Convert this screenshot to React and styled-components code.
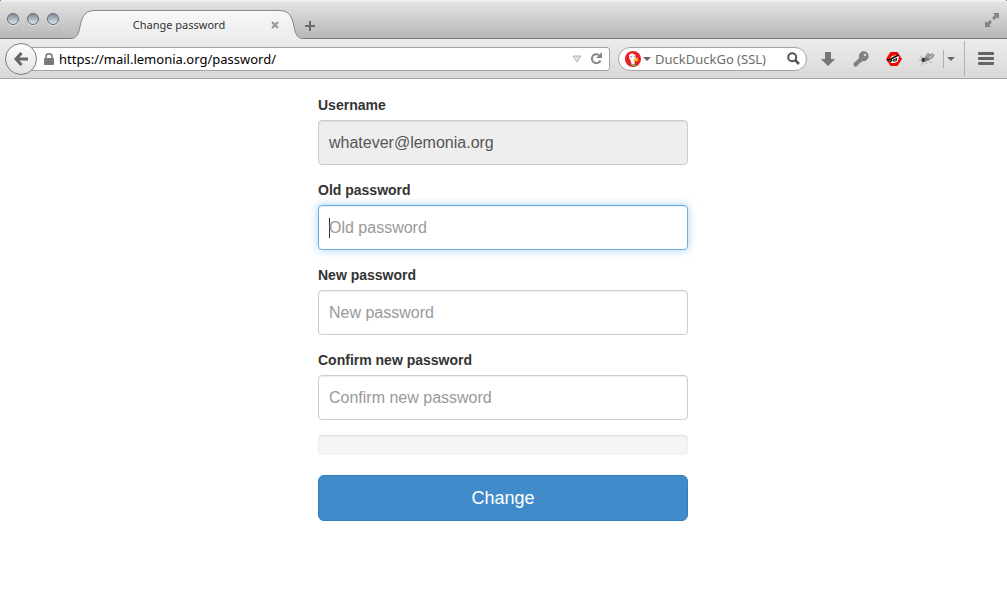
import React, { useState } from "react";
import styled, { createGlobalStyle } from "styled-components";

const fields = [
  { id: "old", label: "Old password", focus: true },
  { id: "new", label: "New password" },
  { id: "confirm", label: "Confirm new password" },
];

function TitleBar() {
  return (
    <Strip>
      <Lights>
        <Light aria-label="Close window" />
        <Light aria-label="Minimize window" />
        <Light aria-label="Zoom window" />
      </Lights>
      <Tab>
        <TabEdge viewBox="0 0 24 29" aria-hidden="true">
          <path d="M0 29V28.500C5 28.500 7 25 8.500 19C10.500 9 12 .5 24 .5V29Z" fill="url(#tabFill)" />
          <path d="M0 28.500C5 28.500 7 25 8.500 19C10.500 9 12 .5 24 .5" fill="none" stroke="#858585" />
          <defs>
            <linearGradient id="tabFill" x1="0" y1="0" x2="0" y2="1">
              <stop offset="0" stopColor="#f8f8f8" />
              <stop offset="1" stopColor="#ececec" />
            </linearGradient>
          </defs>
        </TabEdge>
        <TabBody>
          <TabTitle>Change password</TabTitle>
          <TabClose aria-label="Close tab">
            <svg width="8" height="8" viewBox="0 0 8 8">
              <path d="M1 1L7 7M7 1L1 7" stroke="#999" strokeWidth="2.200" />
            </svg>
          </TabClose>
        </TabBody>
        <TabEdge viewBox="0 0 24 29" aria-hidden="true">
          <path d="M24 29V28.500C19 28.500 17 25 15.500 19C13.500 9 12 .5 0 .5V29Z" fill="url(#tabFill)" />
          <path d="M24 28.500C19 28.500 17 25 15.500 19C13.500 9 12 .5 0 .5" fill="none" stroke="#858585" />
        </TabEdge>
      </Tab>
      <NewTab aria-label="New tab">
        <svg width="10" height="10" viewBox="0 0 10 10">
          <path d="M5 0V10M0 5H10" stroke="#6a6a6a" strokeWidth="2" />
        </svg>
      </NewTab>
      <FullScreen aria-label="Full screen">
        <svg width="14" height="14" viewBox="0 0 14 14" fill="#848484">
          <path d="M8 0H14V6L12 4.300L9 7L7 5L9.700 2Z" />
          <path d="M0 8L2 9.700L5 7L7 9L4.300 12L6 14H0Z" />
        </svg>
      </FullScreen>
    </Strip>
  );
}

function NavBar() {
  const [url, setUrl] = useState("https://mail.lemonia.org/password/");

  return (
    <Nav>
      <Back aria-label="Back">
        <svg width="14" height="14" viewBox="0 0 14 14">
          <path d="M7.500 1L2 7L7.500 13M2.500 7H14" fill="none" stroke="#666" strokeWidth="3" />
        </svg>
      </Back>
      <UrlBar>
        <svg width="10" height="12" viewBox="0 0 10 12">
          <path d="M2 6V3.500A3 2.800 0 0 1 8 3.500V6" fill="none" stroke="#7a7a7a" strokeWidth="1.600" />
          <rect y="5" width="10" height="7" rx="1" fill="#7a7a7a" />
        </svg>
        <UrlInput
          aria-label="Address"
          value={url}
          onChange={(e) => setUrl(e.target.value)}
        />
        <BarButton aria-label="History">
          <svg width="10" height="8" viewBox="0 0 10 8">
            <path d="M1 1H9L5 7Z" fill="#e4e4e4" stroke="#b4b4b4" />
          </svg>
        </BarButton>
        <BarButton aria-label="Reload">
          <svg width="13" height="13" viewBox="0 0 13 13">
            <path d="M10.500 8.500A4.500 4.500 0 1 1 9 3" fill="none" stroke="#858585" strokeWidth="2" />
            <path d="M12 0V6H6Z" fill="#858585" />
          </svg>
        </BarButton>
      </UrlBar>
      <SearchBar>
        <Engine aria-label="Search engine">
          <svg width="16" height="16" viewBox="0 0 16 16">
            <circle cx="8" cy="8" r="8" fill="#ea1c25" />
            <path d="M4 4.500C4.500 2.500 7 2 8.500 3C10.500 3.500 11 5 10.500 7L9.500 11L10 14.500H7L5.500 9.500C4.500 8 4 6.500 4 4.500Z" fill="#fff" />
            <path d="M8.500 8.500C10 7.500 12 6.500 13.500 6.500L12.500 8L13.500 9.500C11.500 10.500 9.500 10.500 8.500 10Z" fill="#fbc51d" />
            <path d="M6 12.500L8 13.300L10.500 12.500V15L8 14.300L6 15Z" fill="#55b83f" />
            <circle cx="6" cy="5.800" r="0.700" fill="#46659c" />
            <circle cx="9.200" cy="5.500" r="0.600" fill="#46659c" />
          </svg>
          <Caret />
        </Engine>
        <SearchInput aria-label="Search" placeholder="DuckDuckGo (SSL)" />
        <BarButton aria-label="Go">
          <svg width="13" height="13" viewBox="0 0 13 13" fill="none" stroke="#555">
            <circle cx="5.200" cy="5.200" r="4" strokeWidth="2" />
            <path d="M8 8L12 12" strokeWidth="2.500" />
          </svg>
        </BarButton>
      </SearchBar>
      <Tools>
        <Tool aria-label="Downloads">
          <svg width="14" height="14" viewBox="0 0 14 14">
            <path d="M4 0H10V7H14L7 14L0 7H4Z" fill="#757575" />
          </svg>
        </Tool>
        <Tool aria-label="Passwords">
          <svg width="16" height="16" viewBox="0 0 16 16">
            <path
              d="M11 .5A4.600 4.600 0 0 0 6.600 7L1 12.300V14.500L2.200 15.500L4.200 14.800V13.300H5.900V11.600H7.600L9.300 9.700A4.700 4.700 0 1 0 11 .5ZM12 2.500A1.500 1.500 0 1 1 11.990 2.500Z"
              fill="#808080"
              stroke="#6c6c6c"
              strokeWidth=".5"
              fillRule="evenodd"
            />
          </svg>
        </Tool>
        <Tool aria-label="Script blocker">
          <svg width="16" height="14" viewBox="0 0 16 14">
            <path d="M4.500 0H11.500L16 7L11.500 14H4.500L0 7Z" fill="#f00800" />
            <path d="M3 8L6 4L11 3L13 5L12 9L9 11H5Z" fill="#fff" />
            <path d="M1 8.500L4 7.500L12.500 3M4 10L6 8" fill="none" stroke="#111" strokeWidth="1.500" />
            <path d="M7 8L11 6.500L10 9H7Z" fill="none" stroke="#111" />
          </svg>
        </Tool>
        <Tool aria-label="Bug tools">
          <svg width="16" height="14" viewBox="0 0 16 14">
            <path d="M5 6L9 1L12 2L15 2L14 6L9 8Z" fill="#b8b8b8" />
            <path d="M6 6L9 1.500L11 4M7 6L13 2L15 3L13 6L8 8" fill="none" stroke="#7c7c7c" strokeWidth=".9" />
            <circle cx="4.500" cy="8" r="2.200" fill="#333" />
            <ellipse cx="8" cy="7.500" rx="2.500" ry="1.400" fill="#777" />
            <path d="M4 6L1 4M3 8L0 8M4 9L3 13M6 9L8 12M9 8L13 11" fill="none" stroke="#999" strokeWidth=".8" />
          </svg>
        </Tool>
        <SmallLine />
        <BarButton aria-label="More tools">
          <Caret />
        </BarButton>
      </Tools>
      <Line />
      <Tool aria-label="Menu">
        <svg width="16" height="13" viewBox="0 0 16 13" fill="#646464">
          <rect width="16" height="3" rx="1" />
          <rect y="5" width="16" height="3" rx="1" />
          <rect y="10" width="16" height="3" rx="1" />
        </svg>
      </Tool>
    </Nav>
  );
}

function App() {
  return (
    <Window>
      <GlobalStyle />
      <TitleBar />
      <NavBar />
      <Form onSubmit={(e) => e.preventDefault()}>
        <Group>
          <Label htmlFor="username">Username</Label>
          <Input id="username" value="whatever@lemonia.org" disabled />
        </Group>
        {fields.map((field) => (
          <Group key={field.id}>
            <Label htmlFor={field.id}>{field.label}</Label>
            <Input
              id={field.id}
              type="password"
              placeholder={field.label}
              autoFocus={field.focus}
            />
          </Group>
        ))}
        <Strength role="progressbar" aria-label="Password strength" aria-valuenow={0} />
        <Submit type="submit">Change</Submit>
      </Form>
    </Window>
  );
}

export default App;

const GlobalStyle = createGlobalStyle`
  * {
    box-sizing: border-box;
  }
  body {
    margin: 0;
    background: #2a8a78;
    font-family: "Liberation Sans", Helvetica, Arial, sans-serif;
  }
  button {
    border: 0;
    padding: 0;
    background: none;
  }
  svg {
    display: block;
    flex-shrink: 0;
  }
`;
const Window = styled.div`
  min-height: 100vh;
  background: #fff;
  border-radius: 3px 3px 0 0;
  overflow: hidden;
`;
const Strip = styled.header`
  display: flex;
  height: 39px;
  background: linear-gradient(#f4f4f4, #e2e2e2 3px, #b6b6b6);
  box-shadow: inset 0 -1px #7c7c7c;
  font-family: "Noto Sans", "Lucida Grande", sans-serif;
`;
const Lights = styled.div`
  display: flex;
  gap: 8px;
  padding: 13px 12px 0 7px;
`;
const Light = styled.button`
  width: 12px;
  height: 12px;
  border: 1px solid #5f6871 !important;
  border-radius: 50%;
  background: linear-gradient(#7f8b98, #a7b3be 45%, #dde5ec) !important;
  box-shadow: 0 1px rgba(255, 255, 255, 0.6);
`;
const Tab = styled.div`
  display: flex;
  height: 29px;
  margin-top: 10px;
`;
const TabEdge = styled.svg`
  width: 24px;
  height: 29px;
`;
const TabBody = styled.div`
  display: flex;
  align-items: center;
  width: 184px;
  padding-left: 4px;
  border-top: 1px solid #858585;
  background: linear-gradient(#f8f8f8, #ececec);
`;
const TabTitle = styled.span`
  flex: 1;
  padding-right: 12px;
  text-align: center;
  font-size: 11px;
  line-height: 16px;
  color: #333;
`;
const TabClose = styled.button`
  width: 8px;
`;
const NewTab = styled.button`
  align-self: center;
  padding: 12px 0 0 2px !important;
`;
const FullScreen = styled.button`
  margin: 0 8px 0 auto;
`;
const Nav = styled.nav`
  display: flex;
  align-items: center;
  height: 40px;
  padding: 0 5px;
  background: linear-gradient(#ececec, #d9d9d9);
  border-bottom: 1px solid #a6a6a6;
  font-family: "Noto Sans", "Lucida Grande", sans-serif;
`;
const Back = styled.button`
  display: grid;
  place-items: center;
  position: relative;
  width: 32px;
  height: 32px;
  border: 1px solid #7d7d7d !important;
  border-radius: 50%;
  background: linear-gradient(#fdfdfd, #e2e2e2) !important;
`;
const UrlBar = styled.div`
  display: flex;
  align-items: center;
  flex: 1;
  min-width: 0;
  height: 24px;
  margin: 0 8px 0 -8px;
  padding: 0 6px 0 14px;
  gap: 5px;
  border: 1px solid #a3a3a3;
  border-radius: 3px;
  background: #fff;
`;
const UrlInput = styled.input`
  flex: 1;
  min-width: 0;
  border: 0;
  padding: 0;
  background: none;
  font: 13px/20px "Noto Sans", "Lucida Grande", sans-serif;
  color: #000;
  outline: 0;
`;
const BarButton = styled.button`
  display: grid;
  place-items: center;
  min-width: 14px;
  height: 20px;
`;
const SearchBar = styled(UrlBar)`
  flex: 0 0 189px;
  margin: 0;
  padding: 0 6px;
  gap: 4px;
  border-radius: 12px;
`;
const Engine = styled.button`
  display: flex;
  align-items: center;
  gap: 2px;
`;
const Caret = styled.span`
  border: 4px solid transparent;
  border-top-color: #666;
  border-bottom: 0;
`;
const SearchInput = styled(UrlInput)`
  &::placeholder {
    color: #6c6c6c;
    opacity: 1;
  }
`;
const Tools = styled.div`
  display: flex;
  align-items: center;
  padding: 0 6px 0 4px;
`;
const Tool = styled.button`
  display: grid;
  place-items: center;
  width: 33px;
  height: 32px;
`;
const SmallLine = styled.span`
  width: 1px;
  height: 18px;
  background: #b0b0b0;
`;
const Line = styled.span`
  width: 1px;
  height: 35px;
  margin-right: 4px;
  background: #a9b2bb;
`;
const Form = styled.form`
  max-width: 401px;
  margin: 0 auto;
  padding: 16px 16px 0 15px;
`;
const Group = styled.div`
  margin-bottom: 15px;
`;
const Label = styled.label`
  display: block;
  margin-bottom: 5px;
  font-size: 14px;
  line-height: 20px;
  font-weight: bold;
  color: #333;
`;
const Input = styled.input`
  display: block;
  width: 100%;
  height: 45px;
  padding: 1px 10px 0;
  border: 1px solid #ccc;
  border-radius: 4px;
  background: #fff;
  box-shadow: inset 0 1px 1px rgba(0, 0, 0, 0.075);
  font-family: inherit;
  font-size: 16px;
  color: #555;
  outline: 0;

  &::placeholder {
    color: #999;
    opacity: 1;
  }
  &:disabled {
    background: #eee;
  }
  &:focus {
    border-color: #66afe9;
    box-shadow: inset 0 1px 1px rgba(0, 0, 0, 0.075),
      0 0 8px rgba(102, 175, 233, 0.6);
  }
  /* steady caret while the field is empty */
  &:focus:placeholder-shown {
    caret-color: transparent;
    background: linear-gradient(#333, #333) 10px center / 1px 20px no-repeat
      #fff;
  }
`;
const Strength = styled.div`
  height: 20px;
  margin-bottom: 20px;
  border-radius: 4px;
  background: #f5f5f5;
  box-shadow: inset 0 1px 2px rgba(0, 0, 0, 0.1);
`;
const Submit = styled.button`
  width: 100%;
  height: 46px;
  padding-top: 1px !important;
  border: 1px solid #357ebd !important;
  border-radius: 6px;
  background: #428bca !important;
  font-family: inherit;
  font-size: 18px;
  color: #fff;
`;
